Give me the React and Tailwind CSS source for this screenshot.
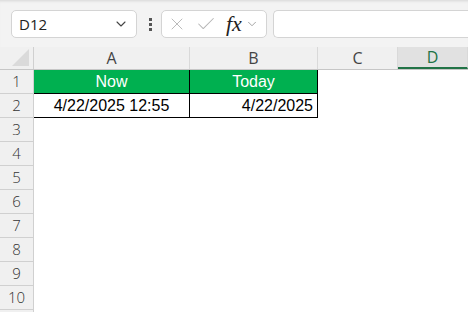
import { ChevronDown, X, Check } from 'lucide-react'

const rows = [1, 2, 3, 4, 5, 6, 7, 8, 9, 10, null]

function Toolbar() {
  return (
    <div className="flex h-[47px] items-start bg-[#f3f3f3] pt-[10px] shadow-[inset_0_3px_3px_-2px_rgba(0,0,0,0.12)]">
      {/* name box */}
      <div className="ml-[11px] flex h-[28px] w-[126px] items-center rounded-[5px] border border-[#d4d4d4] bg-white pl-[7px] pr-[7px]">
        <span className="flex-1 text-[15px] text-[#222]" style={{ fontFamily: '"Open Sans", sans-serif' }}>D12</span>
        <ChevronDown size={16} strokeWidth={1.6} className="text-[#444]" />
      </div>
      <div className="ml-[10px] flex h-[28px] w-[6px] flex-col items-center justify-center gap-[2px]">
        <span className="h-[3px] w-[3px] bg-[#555]" />
        <span className="h-[3px] w-[3px] bg-[#555]" />
        <span className="h-[3px] w-[3px] bg-[#555]" />
      </div>
      {/* fx box */}
      <div className="ml-[8px] flex h-[28px] w-[106px] items-center rounded-[5px] border border-[#d4d4d4] bg-white pl-[5px]">
        <X size={20} strokeWidth={1.1} className="text-[#b5b5b5]" />
        <Check size={22} strokeWidth={1.1} className="ml-[8px] text-[#b5b5b5]" />
        <span className="ml-[9px] text-[22px] font-medium italic leading-none text-[#222]" style={{ fontFamily: '"Liberation Serif", serif' }}>fx</span>
        <ChevronDown size={14} strokeWidth={1.3} className="ml-[3px] text-[#888]" />
      </div>
      <div className="ml-[6px] h-[28px] flex-1 rounded-l-[5px] border border-r-0 border-[#d4d4d4] bg-white" />
    </div>
  )
}

function ColHeader({ label, w, active }) {
  return (
    <div
      className={
        'flex h-full items-center justify-center border-r border-[#d9d9d9] text-[16px] ' +
        (active ? 'flex-1 border-b-2 border-b-[#217346] bg-[#e1e1e1] text-[#217346]' : 'text-[#444]')
      }
      style={w ? { width: w } : undefined}
    >
      {label}
    </div>
  )
}

export default function App() {
  const font = { fontFamily: '"Liberation Sans", Arial, sans-serif' }
  const ui = { fontFamily: '"Open Sans", "Noto Sans", sans-serif' }
  return (
    <div className="h-[312px] w-[468px] overflow-hidden bg-white">
      <Toolbar />
      {/* column headers */}
      <div className="flex h-[23px] border-b border-[#c6c6c6] bg-[#f0f0f0]" style={ui}>
        <div className="relative h-full w-[34px] border-r border-[#d0d0d0]">
          <svg width="18" height="17" viewBox="0 0 18 17" className="absolute bottom-[3px] right-[3px]">
            <polygon points="17,0 17,17 0,17" fill="#dadada" />
          </svg>
        </div>
        <ColHeader label="A" w={156} />
        <ColHeader label="B" w={128} />
        <ColHeader label="C" w={80} />
        <ColHeader label="D" active />
      </div>
      {rows.map((r, i) => (
        <div key={i} className="flex h-[24px]">
          <div
            className="flex h-full w-[34px] items-center justify-center border-r border-b border-[#d0d0d0] bg-[#f0f0f0] text-[15px] font-light text-[#333]"
            style={ui}
          >
            {r}
          </div>
          {r === 1 && (
            <>
              <div className="flex w-[156px] items-center justify-center border-r border-b border-black bg-[#00b050] text-[16px] text-white" style={font}>Now</div>
              <div className="flex w-[128px] items-center justify-center border-r border-b border-black bg-[#00b050] text-[16px] text-white" style={font}>Today</div>
            </>
          )}
          {r === 2 && (
            <>
              <div className="flex w-[156px] items-center justify-center border-r border-b border-black text-[16px] text-black" style={font}>4/22/2025 12:55</div>
              <div className="flex w-[128px] items-center justify-end border-r border-b border-black pr-[4px] text-[16px] text-black" style={font}>4/22/2025</div>
            </>
          )}
          <div className="flex-1" />
        </div>
      ))}
    </div>
  )
}
